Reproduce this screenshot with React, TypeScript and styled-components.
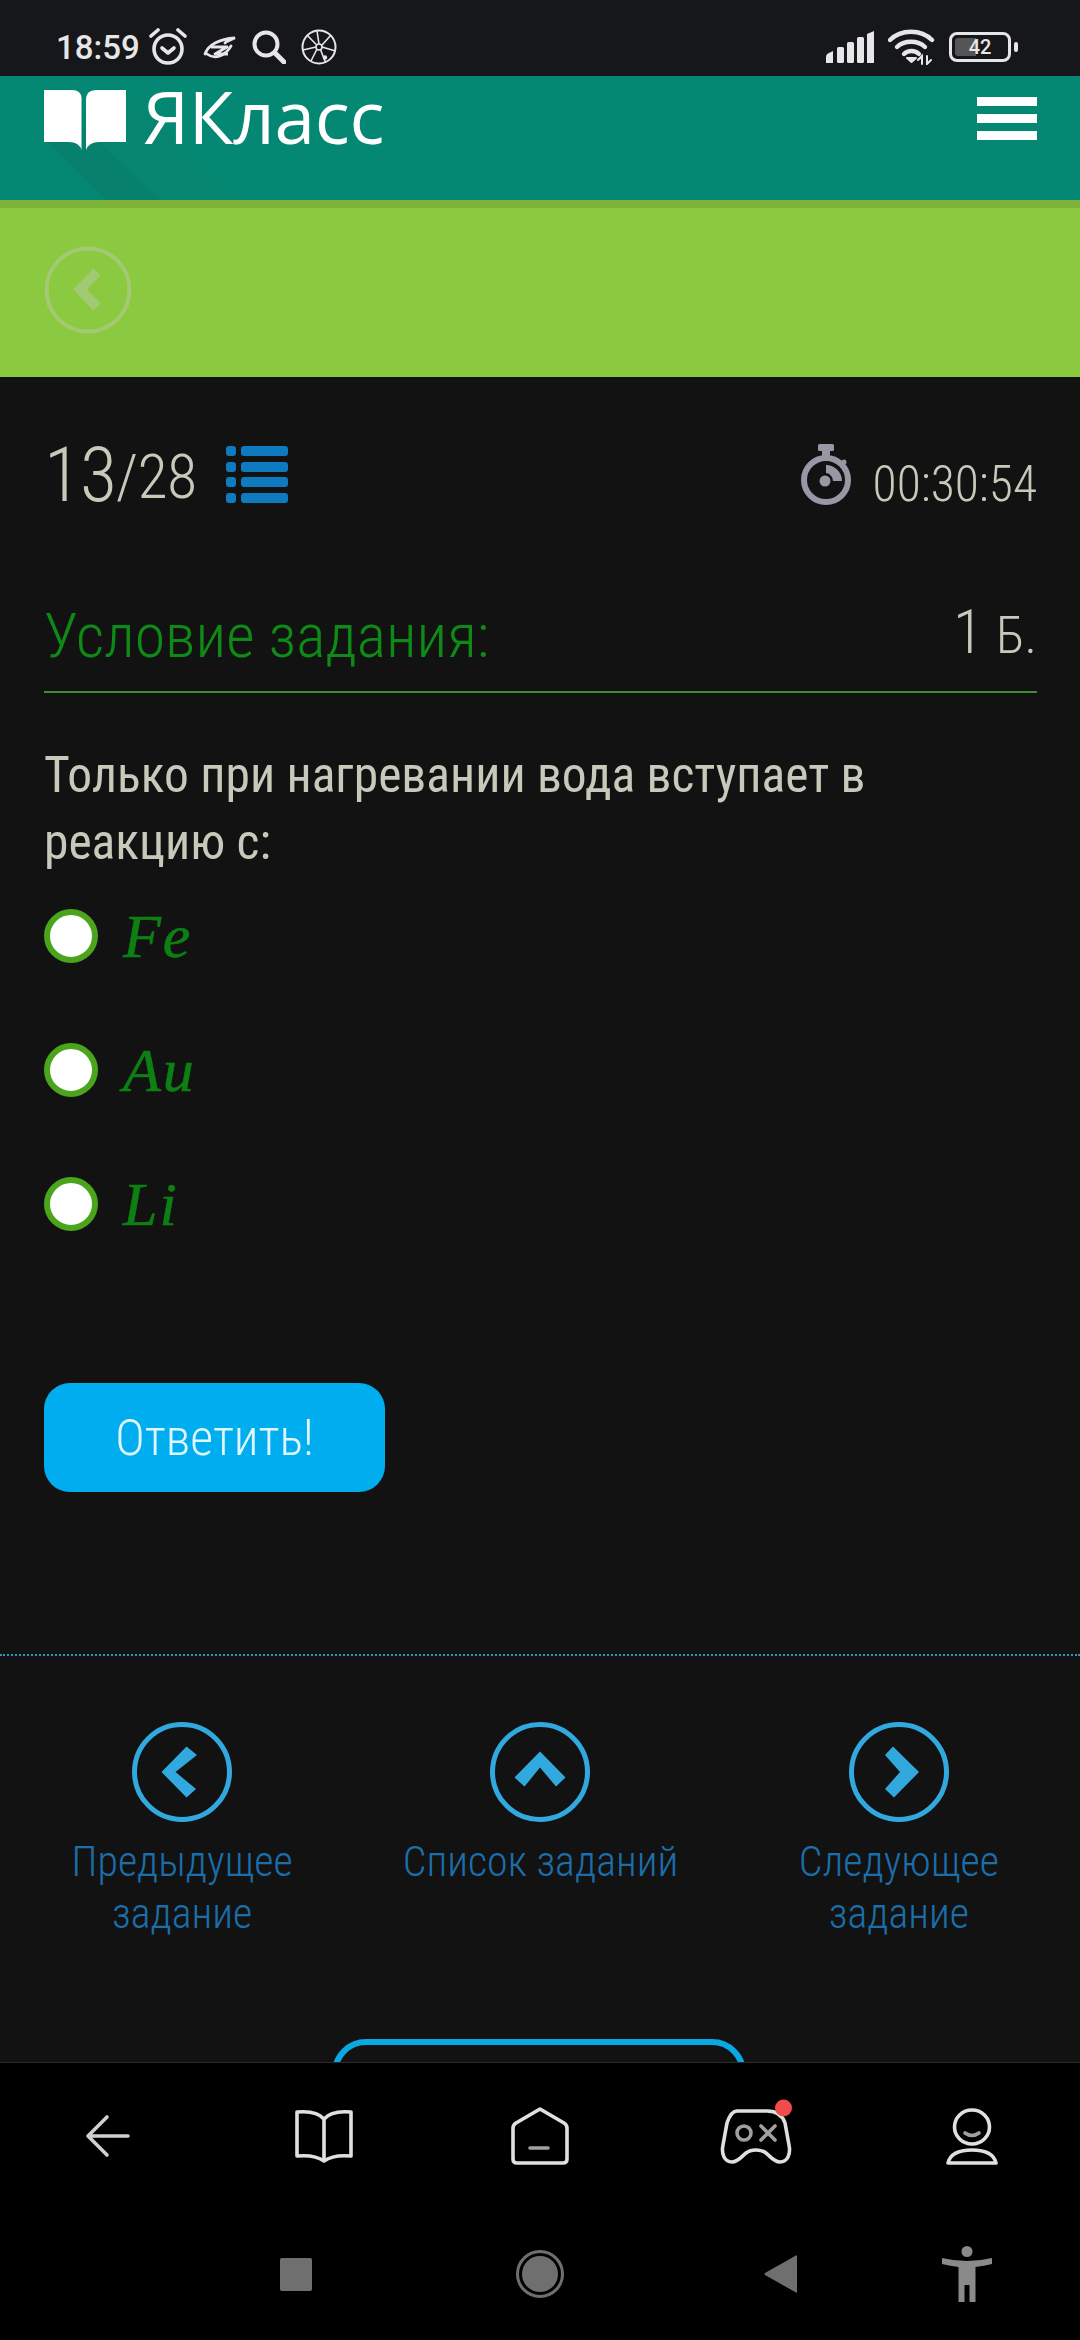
import React from 'react';
import styled, { createGlobalStyle } from 'styled-components';

const GlobalStyle = createGlobalStyle`
  html, body {
    margin: 0;
    padding: 0;
    background: #121212;
  }
  * {
    box-sizing: border-box;
  }
`;

const Page = styled.div`
  width: 1080px;
  height: 2340px;
  display: flex;
  flex-direction: column;
  overflow: hidden;
  background: #121212;
  font-family: 'Roboto', 'Liberation Sans', sans-serif;
  font-stretch: 75%;
`;

const StatusBar = styled.div`
  height: 76px;
  flex: none;
  display: flex;
  align-items: center;
  justify-content: space-between;
  padding: 18px 63px 0 56px;
  background: #16171b;
  color: #e6e6e6;
`;

const StatusGroup = styled.div<{ $gap: number }>`
  display: flex;
  align-items: center;
  gap: ${(p) => p.$gap}px;
`;

const Clock = styled.span`
  font-size: 33px;
  font-weight: 500;
  font-stretch: 100%;
  line-height: 1;
  margin-right: -7px;
`;

const Header = styled.header`
  position: relative;
  height: 124px;
  flex: none;
  display: flex;
  justify-content: space-between;
  padding: 14px 43px 0 44px;
  background: #058873;
`;

const LongShadow = styled.svg`
  position: absolute;
  left: 0;
  top: 0;
`;

const Brand = styled.div`
  position: relative;
  display: flex;
  gap: 17px;
  height: 60px;
`;

const BrandName = styled.span`
  color: #fff;
  font-family: 'Open Sans', sans-serif;
  font-stretch: 100%;
  font-size: 73px;
  font-weight: 400;
  line-height: 52px;
  letter-spacing: -0.3px;
`;

const Burger = styled.div`
  display: flex;
  flex-direction: column;
  gap: 8px;
  padding-top: 7px;
`;

const BurgerBar = styled.div`
  width: 60px;
  height: 9px;
  background: #fff;
`;

const SubHeader = styled.div`
  height: 177px;
  flex: none;
  display: flex;
  align-items: center;
  padding: 0 0 6px 44px;
  border-top: 8px solid #7fb239;
  background: #8bc940;
`;

const Main = styled.main`
  flex: 1;
  min-height: 0;
  overflow: hidden;
  display: flex;
  flex-direction: column;
`;

const Content = styled.div`
  padding: 0 43px 0 44px;
`;

const CounterRow = styled.div`
  height: 130px;
  display: flex;
  align-items: flex-start;
  justify-content: space-between;
  padding-top: 66px;
`;

const Counter = styled.div`
  display: flex;
  align-items: flex-start;
  color: #c9c9bb;
  font-weight: 300;
`;

const CounterValue = styled.span`
  font-size: 76px;
  line-height: 64px;
  letter-spacing: -1px;
`;

const CounterTotal = styled.span`
  font-size: 62px;
  line-height: 68px;
  letter-spacing: -0.5px;
`;

const ListIconSlot = styled.span`
  display: block;
  margin: 3px 0 0 29px;
`;

const Timer = styled.div`
  display: flex;
  align-items: flex-start;
  gap: 22px;
  margin-top: 1px;
`;

const TimerText = styled.span`
  color: #c9c9bb;
  font-size: 49.500px;
  font-weight: 300;
  line-height: 60px;
  margin-top: 10px;
`;

const ConditionRow = styled.div`
  height: 186px;
  padding-bottom: 19px;
  display: flex;
  align-items: flex-end;
  justify-content: space-between;
  border-bottom: 2px solid #3f8c35;
`;

const ConditionTitle = styled.h2`
  margin: 0;
  color: #0f8a16;
  font-size: 62px;
  font-weight: 300;
  line-height: 72px;
`;

const Points = styled.div`
  color: #c9c9bb;
  font-weight: 300;
  font-size: 62px;
  line-height: 72px;
`;

const PointsUnit = styled.span`
  font-size: 52px;
  margin-left: 13px;
`;

const Question = styled.p`
  max-width: 880px;
  margin: 49px 0 0;
  color: #c9c9bb;
  font-size: 49.500px;
  font-weight: 400;
  line-height: 67px;
`;

const Answers = styled.div`
  margin-top: 33px;
  display: flex;
  flex-direction: column;
  gap: 80px;
`;

const Answer = styled.label`
  height: 54px;
  display: flex;
  align-items: center;
  gap: 25px;
`;

const Radio = styled.span`
  width: 54px;
  height: 54px;
  flex: none;
  border-radius: 50%;
  background: #fff;
  border: 6px solid #4aa51c;
`;

const Formula = styled.span`
  color: #0d8014;
  font-family: 'Liberation Serif', serif;
  font-stretch: 100%;
  font-size: 62px;
  font-style: italic;
  line-height: 50px;
  letter-spacing: 2px;
  -webkit-text-stroke: 0.6px #0d8014;
`;

const SubmitButton = styled.button`
  display: block;
  width: 341px;
  height: 109px;
  margin-top: 152px;
  border: 0;
  border-radius: 26px;
  background: #00adef;
  color: #dff6ff;
  font-family: inherit;
  font-size: 50px;
  font-stretch: 75%;
  font-weight: 300;
`;

const Separator = styled.div`
  margin-top: 162px;
  height: 2px;
  flex: none;
  border-top: 2px dotted #2b97bb;
`;

const TaskNav = styled.nav`
  display: grid;
  grid-template-columns: repeat(3, 1fr);
  padding: 66px 2px 0 3px;
  height: 383px;
  flex: none;
`;

const TaskLink = styled.a`
  display: flex;
  flex-direction: column;
  align-items: center;
  color: #1b6ea9;
  font-size: 42px;
  font-weight: 300;
  line-height: 52px;
  text-align: center;
`;

const TaskCaption = styled.span`
  margin-top: 14px;
  width: 240px;
`;

const WideCaption = styled(TaskCaption)`
  width: 300px;
`;

const OutlineButton = styled.div`
  width: 414px;
  height: 120px;
  flex: none;
  margin: 0 auto;
  transform: translateX(-1px);
  border: 6px solid #0aa7e2;
  border-radius: 34px;
`;

const BottomBar = styled.div`
  height: 278px;
  flex: none;
  display: flex;
  flex-direction: column;
  background: #000;
  border-top: 1px solid #2a2a2a;
`;

const AppTabs = styled.div`
  height: 145px;
  flex: none;
  display: grid;
  grid-template-columns: repeat(5, 216px);
  align-items: center;
  justify-items: center;
`;

const SystemKeys = styled.div`
  display: flex;
  align-items: center;
  height: 132px;
  padding-left: 280px;
`;

const SystemKey = styled.svg<{ $gap: number }>`
  margin-left: ${(p) => p.$gap}px;
`;

const AlarmIcon = () => (
  <svg width="40" height="38" viewBox="0 0 40 38" fill="none" stroke="#e6e6e6">
    <circle cx="20" cy="21" r="14" strokeWidth="3.600" />
    <path d="M14 20l6 5 6-5" strokeWidth="3.600" strokeLinecap="round" strokeLinejoin="round" />
    <path d="M3 8l7-6M37 8l-7-6" strokeWidth="3.600" strokeLinecap="round" />
  </svg>
);

const EyeIcon = () => (
  <svg width="34" height="26" viewBox="0 0 34 26" fill="none" stroke="#e6e6e6" strokeWidth="2.800">
    <path d="M2 20c3-9 14-15 30-16-5 2-8 3-10 5" strokeLinecap="round" />
    <path d="M4 20c8 6 18 2 24-8" strokeLinecap="round" />
    <path d="M8 13h16L12 20h13" strokeLinejoin="round" />
  </svg>
);

const SearchIcon = () => (
  <svg width="34" height="34" viewBox="0 0 34 34" fill="none" stroke="#e6e6e6" strokeLinecap="round">
    <circle cx="14" cy="14" r="11.500" strokeWidth="4" />
    <path d="M23 23l9 9" strokeWidth="5" />
  </svg>
);

const WheelIcon = () => (
  <svg width="36" height="36" viewBox="0 0 36 36" fill="none" stroke="#e6e6e6" strokeWidth="1.600">
    <circle cx="18" cy="18" r="16.500" strokeWidth="2" />
    <circle cx="18" cy="18" r="3" />
    <path d="M18 15L16 2M20.600 16.500L30 6M21 18l13.500 4M19.500 20.500l5 13M16 20l-6 12M15 18L2 21M15.700 16L6 6" />
    <circle cx="24" cy="28.500" r="2.200" fill="#e6e6e6" stroke="none" />
  </svg>
);

const SignalIcon = () => (
  <svg width="48" height="32" viewBox="0 0 48 32" fill="#e6e6e6">
    <path d="M0 32v-6q0-3 3-4l4-2v12z" />
    <rect x="11" y="16" width="7" height="16" rx="1.500" />
    <rect x="21" y="11" width="7" height="21" rx="1.500" />
    <rect x="31" y="6" width="7" height="26" rx="1.500" />
    <path d="M41 3l7-3v32h-7z" />
  </svg>
);

const WifiIcon = () => (
  <svg width="47" height="36" viewBox="0 0 47 36" fill="none" stroke="#e6e6e6" strokeWidth="4.400" strokeLinecap="round">
    <path d="M2 11c11-11 31-11 42 0" />
    <path d="M9 18c7-7 21-7 28 0" />
    <path d="M16 25c4-4 11-4 15 0" />
    <path d="M19 29l4.500 4 4.500-4z" fill="#e6e6e6" strokeWidth="2" strokeLinejoin="round" />
    <path d="M34 35v-8l-4 4M39 27v8l4-4" strokeWidth="2" />
  </svg>
);

const BatteryShell = styled.div`
  position: relative;
  width: 62px;
  height: 30px;
  margin-right: 6px;
  border: 3px solid #e6e6e6;
  border-radius: 8px;
  display: flex;
  align-items: center;
  justify-content: center;
  color: #e6e6e6;
  font-size: 20px;
  font-weight: 500;
  font-stretch: 100%;
  line-height: 1;

  &::before {
    content: '';
    position: absolute;
    left: 3px;
    top: 3px;
    bottom: 3px;
    width: 21px;
    border-radius: 3px 0 0 3px;
    background: #555;
  }

  &::after {
    content: '';
    position: absolute;
    right: -10px;
    top: 7px;
    width: 4px;
    height: 10px;
    border-radius: 2px;
    background: #e6e6e6;
  }
`;

const BatteryLevel = styled.span`
  position: relative;
`;

const LogoBook = () => (
  <svg width="82" height="60" viewBox="0 0 82 60" fill="#fff">
    <path d="M0 0H28Q37 0 37.500 8V60Q35 52 25 52H0Z" />
    <path d="M42 60V10Q42 0 52 0H82V52H55Q45 52 42 60Z" />
  </svg>
);

const BackIcon = () => (
  <svg width="88" height="88" viewBox="0 0 88 88" fill="none" stroke="#a3c973">
    <circle cx="44" cy="44" r="41.500" strokeWidth="4" />
    <path d="M53 26L36 43.500 53 61" strokeWidth="10" />
  </svg>
);

const StopwatchIcon = () => (
  <svg width="50" height="61" viewBox="0 0 50 61" fill="#9797a6">
    <rect x="17" y="0" width="16" height="7" rx="1.500" />
    <rect x="21" y="7" width="8" height="6" />
    <circle cx="43" cy="18" r="2.500" />
    <circle cx="25" cy="36" r="22" fill="none" stroke="#9797a6" strokeWidth="6" />
    <circle cx="24" cy="37" r="5.500" />
    <path d="M25 21a16 16 0 0 1 16 16H32a8 8 0 0 0-7-8z" />
  </svg>
);

const TaskListIcon = () => (
  <svg width="62" height="57" viewBox="0 0 62 57" fill="#0e7abf">
    {[0, 16, 31, 47].map((y) => (
      <React.Fragment key={y}>
        <rect x="0" y={y} width="10" height="10" rx="3" />
        <rect x="15" y={y} width="47" height="10" rx="3" />
      </React.Fragment>
    ))}
  </svg>
);

const CircleChevron = ({ points }: { points: string }) => (
  <svg width="100" height="100" viewBox="0 0 100 100">
    <circle cx="50" cy="50" r="47.500" fill="none" stroke="#31a9df" strokeWidth="5" />
    <polygon points={points} fill="#31a9df" />
  </svg>
);

const tabStroke = {
  fill: 'none',
  stroke: '#e0e0e0',
  strokeWidth: 3.6,
  strokeLinecap: 'round' as const,
  strokeLinejoin: 'round' as const,
};

export default function App() {
  return (
    <Page>
      <GlobalStyle />
      <StatusBar>
        <StatusGroup $gap={15}>
          <Clock>18:59</Clock>
          <AlarmIcon />
          <EyeIcon />
          <SearchIcon />
          <WheelIcon />
        </StatusGroup>
        <StatusGroup $gap={14}>
          <SignalIcon />
          <WifiIcon />
          <BatteryShell>
            <BatteryLevel>42</BatteryLevel>
          </BatteryShell>
        </StatusGroup>
      </StatusBar>

      <Header>
        <LongShadow width="300" height="124" viewBox="0 0 300 124">
          <polygon points="44,62 106,124 236,124 126,14" fill="#0a7e6c" opacity="0.3" />
          <polygon points="44,62 106,124 160,124 82,50" fill="#0a7668" opacity="0.3" />
        </LongShadow>
        <Brand>
          <LogoBook />
          <BrandName>ЯКласс</BrandName>
        </Brand>
        <Burger>
          <BurgerBar />
          <BurgerBar />
          <BurgerBar />
        </Burger>
      </Header>

      <SubHeader>
        <BackIcon />
      </SubHeader>

      <Main>
        <Content>
          <CounterRow>
            <Counter>
              <CounterValue>13</CounterValue>
              <CounterTotal>/28</CounterTotal>
              <ListIconSlot>
                <TaskListIcon />
              </ListIconSlot>
            </Counter>
            <Timer>
              <StopwatchIcon />
              <TimerText>00:30:54</TimerText>
            </Timer>
          </CounterRow>

          <ConditionRow>
            <ConditionTitle>Условие задания:</ConditionTitle>
            <Points>
              1<PointsUnit>Б.</PointsUnit>
            </Points>
          </ConditionRow>

          <Question>Только при нагревании вода вступает в реакцию с:</Question>

          <Answers>
            <Answer>
              <Radio />
              <Formula>Fe</Formula>
            </Answer>
            <Answer>
              <Radio />
              <Formula>Au</Formula>
            </Answer>
            <Answer>
              <Radio />
              <Formula>Li</Formula>
            </Answer>
          </Answers>

          <SubmitButton>Ответить!</SubmitButton>
        </Content>

        <Separator />

        <TaskNav>
          <TaskLink>
            <CircleChevron points="29.500,50 54.500,24.500 65,33 43.500,50 64,67 54.500,75.500" />
            <TaskCaption>Предыдущее задание</TaskCaption>
          </TaskLink>
          <TaskLink>
            <CircleChevron points="50,29.500 75.500,55.500 66,64.500 50,45.500 34.500,64.500 24.500,55.500" />
            <WideCaption>Список заданий</WideCaption>
          </TaskLink>
          <TaskLink>
            <CircleChevron points="70,50 44,24.500 36,33 51,50 36,67 45,75.500" />
            <TaskCaption>Следующее задание</TaskCaption>
          </TaskLink>
        </TaskNav>

        <OutlineButton />
      </Main>

      <BottomBar>
        <AppTabs>
          <svg width="46" height="46" viewBox="0 0 46 46" {...tabStroke} stroke="#d0d0d0">
            <path d="M43 23H4M22 4L3 23l19 19" />
          </svg>
          <svg width="58" height="56" viewBox="0 0 58 56" {...tabStroke}>
            <path d="M29 11C24 5 13 3 2 4v44c11-1 20 0 27 5 7-5 16-6 27-5V4C45 3 34 5 29 11zM29 11v42" />
          </svg>
          <svg width="58" height="58" viewBox="0 0 58 58" {...tabStroke}>
            <path d="M29 2L5 16q-3 2-3 5v31q0 4 4 4h46q4 0 4-4V21q0-3-3-5z" />
            <path d="M19 41h18" stroke="#a0a0a0" />
          </svg>
          <svg width="78" height="74" viewBox="0 -4 78 74" {...tabStroke}>
            <path d="M20 8H50Q64 8 68 20L72 42C74 52 70 59 63 59C57 59 54 54 49 50C44 46 34 46 29 50C24 54 21 59 15 59C8 59 4 52 6 42L10 20Q14 8 20 8Z" />
            <circle cx="27" cy="30" r="7" stroke="#a0a0a0" />
            <path d="M44 23L58 37M58 23L44 37" stroke="#a0a0a0" />
            <circle cx="66.500" cy="5" r="8.500" fill="#f14b4b" stroke="none" />
          </svg>
          <svg width="52" height="58" viewBox="0 0 52 58" {...tabStroke}>
            <ellipse cx="26" cy="20" rx="17.500" ry="17" />
            <path d="M19 26q7 5 14 0" stroke="#a0a0a0" />
            <path d="M2 56q3-13 24-13t24 13z" />
          </svg>
        </AppTabs>
        <SystemKeys>
          <SystemKey $gap={0} width="32" height="33" viewBox="0 0 32 33">
            <rect width="32" height="33" rx="2" fill="#6f6f6f" />
          </SystemKey>
          <SystemKey $gap={204} width="48" height="48" viewBox="0 0 48 48">
            <circle cx="24" cy="24" r="22.500" fill="none" stroke="#6f6f6f" strokeWidth="3" />
            <circle cx="24" cy="24" r="18" fill="#6f6f6f" />
          </SystemKey>
          <SystemKey $gap={200} width="33" height="38" viewBox="0 0 33 38">
            <path d="M33 1v36q0 1-1 .5L1 20q-1-1 0-2L32 .5q1-.5 1 .5z" fill="#6f6f6f" />
          </SystemKey>
          <SystemKey $gap={145} width="50" height="56" viewBox="0 0 50 56" fill="#8a8a8a">
            <circle cx="25" cy="5.500" r="5.500" />
            <path d="M0 12Q12 15 25 15T50 12V18Q42 20 33.500 21V56H27.500V39H22.500V56H16.500V21Q8 20 0 18Z" />
          </SystemKey>
        </SystemKeys>
      </BottomBar>
    </Page>
  );
}
